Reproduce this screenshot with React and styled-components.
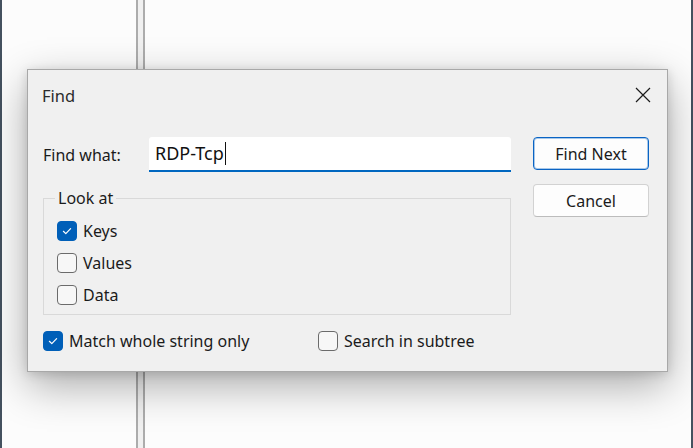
import React from "react";
import styled, { createGlobalStyle } from "styled-components";

const Global = createGlobalStyle`
  html, body { margin: 0; padding: 0; background: #fcfcfc; overflow: hidden; }
  #root { width: 693px; height: 448px; }
`;

const Screen = styled.div`
  position: relative;
  display: flex;
  width: 693px;
  height: 448px;
  overflow: hidden;
  background: #fcfcfc;
  font-family: "Noto Sans", "Open Sans", sans-serif;
  color: #1b1b1b;
`;

const Edge = styled.div`
  flex: 0 0 2px;
  background: #44515f;
`;

const Pane = styled.div`
  flex: ${(p) => (p.$grow ? "1 1 auto" : "0 0 134px")};
  background: #fcfcfc;
`;

const Splitter = styled.div`
  flex: 0 0 9px;
  box-sizing: border-box;
  border-left: 2px solid #acacac;
  border-right: 2px solid #acacac;
  background: #f0f0f0;
`;

const Dialog = styled.div`
  position: absolute;
  left: 27px;
  top: 69px;
  width: 641px;
  height: 303px;
  box-sizing: border-box;
  display: flex;
  flex-direction: column;
  background: #f0f0f0;
  border: 1px solid #a8a8a8;
  box-shadow: 0 14px 40px rgba(0, 0, 0, 0.32), 0 2px 10px rgba(0, 0, 0, 0.14);
`;

const TitleBar = styled.div`
  flex: 0 0 50px;
  display: flex;
  align-items: center;
  justify-content: space-between;
  padding: 0 16px 0 14px;
`;

const Title = styled.span`
  font-size: 16.5px;
  color: #2b2b2b;
`;

const CloseButton = styled.button`
  display: flex;
  align-items: center;
  justify-content: center;
  width: 16px;
  height: 16px;
  padding: 0;
  border: none;
  background: none;
`;

const Body = styled.div`
  flex: 1 1 auto;
  display: flex;
  gap: 22px;
  padding: 17px 17px 13px 15px;
`;

const Main = styled.div`
  flex: 0 0 468px;
  display: flex;
  flex-direction: column;
`;

const FindRow = styled.div`
  display: flex;
  align-items: center;
  height: 35px;
`;

const FieldLabel = styled.span`
  flex: 0 0 106px;
  font-size: 16px;
`;

const TextBox = styled.div`
  flex: 1 1 auto;
  height: 35px;
  box-sizing: border-box;
  display: flex;
  align-items: center;
  padding: 0 6px 1px;
  background: #ffffff;
  border-bottom: 2px solid #0067c0;
  border-radius: 3px 3px 0 0;
  font-size: 18px;
  color: #111;
`;

const Value = styled.span`
  padding-right: 1px;
  line-height: 23px;
  border-right: 1px solid #111;
`;

const Group = styled.fieldset`
  margin: 16px 0 0;
  padding: 7px 0 3px 13px;
  min-width: 0;
  border: 1px solid #d9d9d9;
  display: flex;
  flex-direction: column;
`;

const Legend = styled.legend`
  margin-left: -2px;
  padding: 0 3px;
  font-size: 16px;
  line-height: 20px;
`;

const CheckRow = styled.label`
  display: flex;
  align-items: center;
  gap: 6px;
  height: 32px;
  font-size: 16px;
`;

const Box = styled.span`
  flex: 0 0 20px;
  height: 20px;
  box-sizing: border-box;
  display: flex;
  align-items: center;
  justify-content: center;
  border-radius: 4px;
  border: 1px solid ${(p) => (p.$checked ? "#005fb8" : "#6b6b6b")};
  background: ${(p) => (p.$checked ? "#005fb8" : "#f7f7f7")};
`;

const Options = styled.div`
  display: grid;
  grid-template-columns: 275px auto;
  margin-top: 10px;
`;

const Side = styled.div`
  flex: 0 0 116px;
  display: flex;
  flex-direction: column;
  gap: 14px;
`;

const Button = styled.button`
  height: 33px;
  box-sizing: border-box;
  padding: 0;
  font-family: inherit;
  font-size: 16px;
  color: #1b1b1b;
  background: #fdfdfd;
  border-radius: 4px;
  border: 1px solid ${(p) => (p.$primary ? "#0a64c4" : "#d2d2d2")};
  border-bottom-color: ${(p) => (p.$primary ? "#0a64c4" : "#bcbcbc")};
  box-shadow: ${(p) => (p.$primary ? "inset 0 0 0 1px rgba(10,100,196,0.35)" : "none")};
`;

const Check = ({ checked, children }) => (
  <CheckRow>
    <Box $checked={checked}>
      {checked && (
        <svg width="12" height="12" viewBox="0 0 12 12">
          <path d="M2.4 6.3 L4.8 8.6 L9.6 3.6" fill="none" stroke="#fff" strokeWidth="1.2" strokeLinecap="round" strokeLinejoin="round" />
        </svg>
      )}
    </Box>
    {children}
  </CheckRow>
);

export default function App() {
  return (
    <Screen>
      <Global />
      <Edge />
      <Pane />
      <Splitter />
      <Pane $grow />
      <Edge />
      <Dialog>
        <TitleBar>
          <Title>Find</Title>
          <CloseButton aria-label="Close">
            <svg width="16" height="16" viewBox="0 0 16 16">
              <path d="M1 1 L15 15 M15 1 L1 15" stroke="#1b1b1b" strokeWidth="1.2" />
            </svg>
          </CloseButton>
        </TitleBar>
        <Body>
          <Main>
            <FindRow>
              <FieldLabel>Find what:</FieldLabel>
              <TextBox>
                <Value>RDP-Tcp</Value>
              </TextBox>
            </FindRow>
            <Group>
              <Legend>Look at</Legend>
              <Check checked>Keys</Check>
              <Check>Values</Check>
              <Check>Data</Check>
            </Group>
            <Options>
              <Check checked>Match whole string only</Check>
              <Check>Search in subtree</Check>
            </Options>
          </Main>
          <Side>
            <Button $primary>Find Next</Button>
            <Button>Cancel</Button>
          </Side>
        </Body>
      </Dialog>
    </Screen>
  );
}
